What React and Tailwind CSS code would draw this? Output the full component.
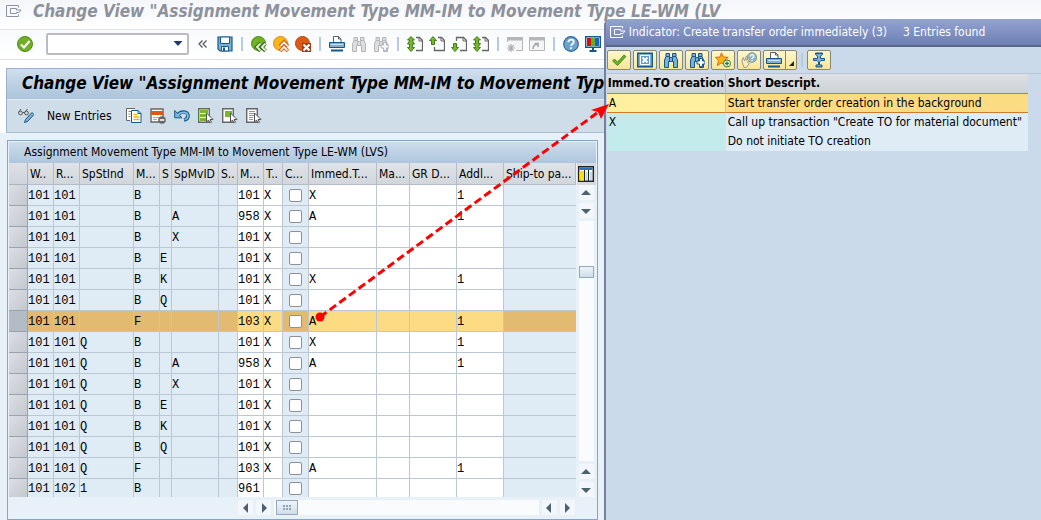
import React from "react";

// tone: "key" is a display-only column, "edit" an input column
const COLUMNS = [
    { head: "W..", width: "w-[26px]", tone: "key" },
    { head: "R...", width: "w-[26px]", tone: "key" },
    { head: "SpStInd", width: "w-[54px]", tone: "key" },
    { head: "M...", width: "w-[26px]", tone: "key" },
    { head: "S", width: "w-[12px]", tone: "key" },
    { head: "SpMvID", width: "w-[47px]", tone: "key" },
    { head: "S..", width: "w-[19px]", tone: "key" },
    { head: "M...", width: "w-[26px]", tone: "edit" },
    { head: "T..", width: "w-[19px]", tone: "edit" },
    { head: "C...", width: "w-[26px]", tone: "check" },
    { head: "Immed.T...", width: "w-[68px]", tone: "edit" },
    { head: "Ma...", width: "w-[33px]", tone: "edit" },
    { head: "GR D...", width: "w-[47px]", tone: "edit" },
    { head: "Addl...", width: "w-[47px]", tone: "edit" },
    { head: "Ship-to pa...", width: "", tone: "key" },
];

const ROWS = [
    ["101", "101", "", "B", "", "", "", "101", "X", "", "X", "", "", "1", ""],
    ["101", "101", "", "B", "", "A", "", "958", "X", "", "A", "", "", "1", ""],
    ["101", "101", "", "B", "", "X", "", "101", "X", "", "", "", "", "", ""],
    ["101", "101", "", "B", "E", "", "", "101", "X", "", "", "", "", "", ""],
    ["101", "101", "", "B", "K", "", "", "101", "X", "", "X", "", "", "1", ""],
    ["101", "101", "", "B", "Q", "", "", "101", "X", "", "", "", "", "", ""],
    ["101", "101", "", "F", "", "", "", "103", "X", "", "A", "", "", "1", ""],
    ["101", "101", "Q", "B", "", "", "", "101", "X", "", "X", "", "", "1", ""],
    ["101", "101", "Q", "B", "", "A", "", "958", "X", "", "A", "", "", "1", ""],
    ["101", "101", "Q", "B", "", "X", "", "101", "X", "", "", "", "", "", ""],
    ["101", "101", "Q", "B", "E", "", "", "101", "X", "", "", "", "", "", ""],
    ["101", "101", "Q", "B", "K", "", "", "101", "X", "", "", "", "", "", ""],
    ["101", "101", "Q", "B", "Q", "", "", "101", "X", "", "", "", "", "", ""],
    ["101", "101", "Q", "F", "", "", "", "103", "X", "", "A", "", "", "1", ""],
    ["101", "102", "1", "B", "", "", "", "961", "", "", "", "", "", "", ""],
];

const SELECTED = 6;

const Svg = ({ children }) => (
    <svg viewBox="0 0 16 16" className="size-4 shrink-0" fill="none" aria-hidden="true">{children}</svg>
);

const WindowIcon = ({ color }) => (
    <svg viewBox="0 0 16 14" className="w-4 h-[14px] shrink-0" fill="none" stroke={color} aria-hidden="true">
        <path d="M12.5 3.5V1.5H.5v11h12v-2" />
        <path d="M4.5 4.5h6V6H15l-2 2.5h-2.5v1h-6z" />
    </svg>
);

const OkIcon = () => (
    <Svg>
        <circle cx="8" cy="8" r="7.5" fill="#6fb122" stroke="#4d8a1c" />
        <path d="M4 8.5l3 3L12.500 5" stroke="#fff" strokeWidth="2.2" />
    </Svg>
);

const SaveIcon = () => (
    <Svg>
        <path d="M1 1h14v14H3l-2-2z" fill="#7fb0d3" stroke="#15598c" strokeWidth="1.2" />
        <path d="M3.500 1h9v6.500h-9z" fill="#fff" stroke="#15598c" />
        <path d="M4.500 10.500h7V15h-7z" fill="#fff" stroke="#15598c" />
        <path d="M6 11.500h2V15H6z" fill="#15598c" />
    </Svg>
);

const BackIcon = () => (
    <Svg>
        <circle cx="7.500" cy="7.500" r="7" fill="#6fb122" stroke="#4d8a1c" />
        <path d="M9.500 7l-4 4 4 4M14.500 7l-4 4 4 4" stroke="#3d7a14" strokeWidth="3.6" />
        <path d="M9.500 7.500L6 11l3.500 3.500M14.500 7.500L11 11l3.500 3.500" stroke="#fff" strokeWidth="1.7" />
    </Svg>
);

const ExitIcon = () => (
    <Svg>
        <circle cx="7.500" cy="7.500" r="7" fill="#f9b516" stroke="#e08a1a" />
        <path d="M7 10l4-4 4 4M7 15l4-4 4 4" stroke="#d9641a" strokeWidth="3.6" />
        <path d="M7.500 10L11 6.500l3.500 3.500M7.500 14.500L11 11l3.500 3.500" stroke="#fff" strokeWidth="1.7" />
    </Svg>
);

const CancelIcon = () => (
    <Svg>
        <circle cx="7.500" cy="7.500" r="7" fill="#dc5a14" stroke="#b8450e" />
        <path d="M7 7h9v9H7z" fill="#a83a12" />
        <path d="M8.500 8.500l6 6M14.500 8.500l-6 6" stroke="#fff" strokeWidth="2.2" />
    </Svg>
);

const PrintIcon = () => (
    <Svg>
        <path d="M4.500 7V.5h5L12 3v4" fill="#fff" stroke="#55606a" />
        <path d="M9.500 .5V3H12" stroke="#55606a" />
        <path d="M.5 6.500h15v5H.5z" fill="#7fb0d3" stroke="#15598c" />
        <path d="M2 8.500h12" stroke="#c8e0f0" />
        <path d="M2 14.500h12" stroke="#15598c" strokeWidth="2" />
    </Svg>
);

const Binoculars = ({ fill, stroke, more, moreFill }) => (
    <Svg>
        <path d="M1.500 15.500V8L3 4.500v-3h3.500v4h3v-4H13v3L14.500 8v7.500h-4V9.500h-5v6z" fill={fill} stroke={stroke} />
        <path d="M3 4.500h3.500M9.500 4.500H13M6.500 5.500v4M9.500 5.500v4" stroke={stroke} />
        {more && <path d="M10.500 6.500h3v2.500H16v3h-2.500v2.500h-3V12H8V9h2.500z" fill={moreFill} stroke={stroke} />}
    </Svg>
);

// arrows: "first" | "prev" | "next" | "last"
const PageIcon = ({ arrows }) => (
    <Svg>
        {arrows === "prev" && <path d="M5.500 11v3.500h10V4.500l-3-3H9" stroke="#666" strokeWidth="1.3" />}
        {arrows === "next" && <path d="M5.500 5V1.500h7l3 3v10H9" stroke="#666" strokeWidth="1.3" />}
        {(arrows === "first" || arrows === "last") && <path d="M9 1.500h3.500l3 3v10H9" stroke="#666" strokeWidth="1.3" />}
        <path d="M12 1.500V5h3.500" stroke="#666" />
        {arrows === "prev" && <path d="M4 .5l3.500 4h-2v4h-3v-4h-2z" fill="#76b82a" stroke="#3f7d1c" />}
        {arrows === "next" && <path d="M4 15.500l3.500-4h-2v-4h-3v4h-2z" fill="#76b82a" stroke="#3f7d1c" />}
        {arrows === "first" && (
            <path d="M4 .5L7.500 4h-2v1L7.500 8h-2v3.500h2L4 15.500l-3.500-4h2V8h-2l2-3V4h-2z" fill="#76b82a" stroke="#3f7d1c" />
        )}
        {arrows === "last" && (
            <path d="M4 .5L7.500 4h-2v3.500h2l-2 3v1h2L4 15.500l-3.500-4h2v-1l-2-3h2V4h-2z" fill="#76b82a" stroke="#3f7d1c" />
        )}
    </Svg>
);

const SessionIcon = ({ shortcut }) => (
    <Svg>
        <path d={shortcut ? "M.5 1.500h15v13H.5z" : "M.5 6V1.500h15v13H9"} fill="#f4f5f6" stroke="#b4b7ba" />
        <path d="M.5 1h15v3.500H.5z" fill="#b4b7ba" />
        {shortcut
            ? <path d="M4 13c0-3 1-4.500 4.500-5M5.500 7.500H9V11" stroke="#a5a8ab" strokeWidth="1.6" />
            : <path d="M4 8v8M0 12h8M1.200 9.200l5.600 5.600M6.800 9.200l-5.600 5.600" stroke="#aaadb0" strokeWidth="1.2" />}
    </Svg>
);

const HelpIcon = () => (
    <Svg>
        <circle cx="8" cy="8" r="7.3" fill="#6ba3cc" stroke="#2a6796" strokeWidth="1.2" />
        <path d="M5.300 6.200C5.300 2.800 10.800 3 10.800 6c0 2-2.700 2-2.700 4" stroke="#fff" strokeWidth="1.7" />
        <path d="M7.200 11.200H9V13H7.200z" fill="#fff" />
    </Svg>
);

const MonitorIcon = () => (
    <Svg>
        <path d="M.7 .7h14.600v10.600H.7z" fill="#fff" stroke="#15598c" strokeWidth="1.4" />
        <path d="M2 2h4v8H2z" fill="#d40f0f" />
        <path d="M6 2h4v8H6z" fill="#5cb31f" />
        <path d="M10 2h4v8h-4z" fill="#1f5fc4" />
        <path d="M8 12v3M4.500 15h7" stroke="#15598c" strokeWidth="2" />
    </Svg>
);

const GlassesPencilIcon = () => (
    <Svg>
        <circle cx="2.500" cy="5" r="1.9" stroke="#555" />
        <circle cx="8.500" cy="5" r="1.9" stroke="#555" />
        <path d="M.6 4.500L3 1M6.600 4.500L9.500 1M4.400 4.500h2.200" stroke="#555" />
        <path d="M6.500 14.500l1-3L14 4.500l2 2-6.500 7z" fill="#7fb0d3" stroke="#15598c" />
    </Svg>
);

const CopyIcon = () => (
    <Svg>
        <path d="M9 .5H.5v12H4" fill="#fff" stroke="#666" />
        <path d="M2.500 3.500H5M2.500 6h2M2.500 8.500h2" stroke="#888" />
        <path d="M5.500 2.500h6.500l3 3v9H5.500z" fill="#fff" stroke="#15598c" />
        <path d="M12 2.500v3h3" stroke="#15598c" />
        <path d="M7.500 6.500h4M7.500 9h6M7.500 11.500h6" stroke="#f2b21c" strokeWidth="1.4" />
    </Svg>
);

const DeleteIcon = () => (
    <Svg>
        <path d="M1 1h12v13H1z" fill="#fff" stroke="#666" strokeWidth="1.4" />
        <path d="M1 3h12v4H1z" fill="#dc5a14" />
        <path d="M3 9.500h8M3 11.500h4" stroke="#aaa" />
        <circle cx="12" cy="12" r="3.8" fill="#666" />
        <path d="M9.800 12h4.400" stroke="#fff" strokeWidth="1.6" />
    </Svg>
);

const UndoIcon = () => (
    <Svg>
        <path d="M4 6.500C7 3 13.500 3 14 7.500c.2 2.500-1.500 4-4 4.500" stroke="#15598c" strokeWidth="3.6" />
        <path d="M.7 2.500v7.300H8z" fill="#7fb0d3" stroke="#15598c" />
        <path d="M3.500 7.200C7 3.500 13.200 3.500 13.900 7.500c.3 2-1.400 3.600-3.400 4.100" stroke="#8fbedd" strokeWidth="1.7" />
    </Svg>
);

// filled: "all" | "block", or nothing for a plain list
const ListCursorIcon = ({ filled }) => (
    <Svg>
        <path d="M.7 .7h10.600v13.600H.7z" fill="#fff" stroke="#666" strokeWidth="1.4" />
        {filled === "all" && <path d="M2 2h8v3H2zM2 6h8v3H2zM2 10h6v3H2z" fill="#76b82a" />}
        {filled === "block" && <path d="M3 3h7v6H3z" fill="#76b82a" />}
        {!filled && <path d="M3 3.500h6M3 5.500h6M3 7.500h5M3 9.500h4M3 11.500h4" stroke="#999" />}
        <path d="M8.500 5v9l2-2 1.500 3 1.500-.8L12 11.500h3z" fill="#fff" stroke="#555" />
    </Svg>
);

const CheckIcon = () => (
    <Svg>
        <path d="M1.500 9l2-2 3 3L13 3l2 1.500-8.500 9z" fill="#6fb122" stroke="#3f7d1c" strokeWidth=".8" />
    </Svg>
);

const CloseBoxIcon = () => (
    <Svg>
        <path d="M.7 1.200h14.600v13.600H.7z" fill="#7fb0d3" stroke="#15598c" strokeWidth="1.4" />
        <path d="M3.500 3.500h9v9h-9z" fill="#5f9cc8" stroke="#fff" />
        <path d="M5.500 5.500l5 5M10.500 5.500l-5 5" stroke="#fff" strokeWidth="2" />
    </Svg>
);

const StarIcon = () => (
    <Svg>
        <path d="M6.500 .8L8.200 5l5 .3-3.800 3.200 1.200 5-4.100-2.700-4.200 2.700 1.200-5L.5 5.300 5 5z" fill="#f9b516" stroke="#dc6a14" />
        <circle cx="12" cy="11.500" r="3.500" fill="#fff" stroke="#2f7d1c" />
        <path d="M12 9.500v4M10 11.500h4" stroke="#2f7d1c" strokeWidth="1.4" />
    </Svg>
);

const HandHelpIcon = () => (
    <Svg>
        <circle cx="11" cy="5.500" r="4.800" fill="#8fb6c4" stroke="#7c9aa4" />
        <path d="M9.300 4.500c0-2.400 3.400-2.300 3.400-.2 0 1.400-1.700 1.400-1.700 2.700M11 8v1.300" stroke="#fff" strokeWidth="1.3" />
        <path d="M3 15.500L.8 9l1.500-3.500L3.500 9l2-5 1 .5-1 4L8 5.500l1 .8-2.500 4 2 1-3 4z" fill="#f7eebb" stroke="#9a9a88" />
    </Svg>
);

const HoldIcon = () => (
    <Svg>
        <path d="M4.500 1v1.500L6.500 4v2.500h-4v2h3.500L7.500 10v3H5v2h6v-2H8.500v-3L10 8.500h3.500v-2h-4V4l2-1.500V1z" fill="#7fb0d3" stroke="#15598c" />
        <path d="M4 1.500h8" stroke="#15598c" />
    </Svg>
);

const ConfigIcon = () => (
    <Svg>
        <path d="M.7 .7h14.600v14.600H.7z" fill="#fff" stroke="#222" strokeWidth="1.4" />
        <path d="M1.500 1.500h13V4h-13z" fill="#2f6fb5" />
        <path d="M1.500 5H6v9.500H1.500z" fill="#ffe500" />
        <path d="M6.500 4v11M10.500 4v11" stroke="#222" />
        <path d="M8.500 6v8M12.800 6v8" stroke="#bcd6ea" strokeWidth="2" />
    </Svg>
);

const UP = "M8 5l5 5H3z";
const DOWN = "M8 11l5-5H3z";
const LEFT = "M5 8l5-5v10z";
const RIGHT = "M11 8L6 3v10z";

const ScrollButton = ({ label, d }) => (
    <button type="button" aria-label={label} className="size-[15px] shrink-0 flex items-center justify-center bg-[#f3f7fb]">
        <svg viewBox="0 0 16 16" className="size-4 shrink-0" fill="#4c6272" aria-hidden="true"><path d={d} /></svg>
    </button>
);

const IconButton = ({ label, children }) => (
    <button type="button" aria-label={label} className="size-4 shrink-0">{children}</button>
);

const Separator = () => (
    <span className="w-1.5 shrink-0 flex justify-center"><span className="w-0.5 h-3.5 bg-[#b5cce0]" /></span>
);

const SystemToolbar = () => (
    <div className="flex items-center gap-1.5 h-[31px] pl-[17px] pb-px border-y border-[#dfe2e6] bg-gradient-to-b from-[#f8fafc] to-white">
        <IconButton label="Enter"><OkIcon /></IconButton>
        <div className="ml-[7px] w-[143px] h-[22px] shrink-0 flex items-center border-2 border-[#b9bcc0] rounded-xs bg-white">
            <input aria-label="Command" className="flex-1 min-w-0 h-full px-1 text-xs outline-none" />
            <button type="button" aria-label="Command history" className="px-1">
                <svg viewBox="0 0 10 6" className="w-2.5 h-1.5" fill="#1f3a6e" aria-hidden="true"><path d="M.5 0h9L5 5z" /></svg>
            </button>
        </div>
        <IconButton label="Collapse">
            <Svg><path d="M7.500 4.500L4 8l3.500 3.500M11.500 4.500L8 8l3.500 3.500" stroke="#555" strokeWidth="1.2" /></Svg>
        </IconButton>
        <IconButton label="Save"><SaveIcon /></IconButton>
        <Separator />
        <IconButton label="Back"><BackIcon /></IconButton>
        <IconButton label="Exit"><ExitIcon /></IconButton>
        <IconButton label="Cancel"><CancelIcon /></IconButton>
        <Separator />
        <IconButton label="Print"><PrintIcon /></IconButton>
        <IconButton label="Find"><Binoculars fill="#dcdee0" stroke="#b4b7ba" /></IconButton>
        <IconButton label="Find next"><Binoculars fill="#dcdee0" stroke="#b4b7ba" more moreFill="#f4f5f6" /></IconButton>
        <Separator />
        <IconButton label="First page"><PageIcon arrows="first" /></IconButton>
        <IconButton label="Previous page"><PageIcon arrows="prev" /></IconButton>
        <IconButton label="Next page"><PageIcon arrows="next" /></IconButton>
        <IconButton label="Last page"><PageIcon arrows="last" /></IconButton>
        <Separator />
        <IconButton label="Create session"><SessionIcon /></IconButton>
        <IconButton label="Create shortcut"><SessionIcon shortcut /></IconButton>
        <Separator />
        <IconButton label="Help"><HelpIcon /></IconButton>
        <IconButton label="Customize layout"><MonitorIcon /></IconButton>
    </div>
);

const cellColor = (tone, selected) => {
    if (selected) return tone === "edit" ? "bg-[#fcdc82]" : "bg-[#e2bb70]";
    return tone === "edit" ? "bg-white" : "bg-[#dfebf5]";
};

const MovementTable = () => (
    <table className="flex-1 min-w-0 table-fixed border-separate border-spacing-0">
        <thead>
            <tr className="h-[22px] text-xs text-black">
                <th aria-label="Select" className="w-[19px] p-0 border-r border-b border-[#a9b4c0] bg-gradient-to-b from-[#dde1e6] to-[#cfd4da]" />
                {COLUMNS.map((col, i) => (
                    <th key={i} className={`${col.width} p-0 pl-0.5 pt-0.5 text-left font-normal leading-[19px] whitespace-nowrap border-r border-b border-[#b3bcc8] bg-gradient-to-b from-[#dfe3e7] to-[#d2d7dc]`}>
                        {col.head}
                    </th>
                ))}
            </tr>
        </thead>
        <tbody className="font-['Liberation_Mono',monospace] text-xs text-black">
            {ROWS.map((row, r) => {
                const last = r === ROWS.length - 1;
                const selected = r === SELECTED;
                const height = last ? "h-[18px] leading-4" : "h-[21px] leading-[18px] border-b";
                return (
                    <tr key={r}>
                        <td className={`${height} p-0 border-r border-[#9aa3ad] ${selected ? "bg-[#b3bcc6]" : "bg-gradient-to-br from-[#dcdfe4] to-[#c3c8cf]"}`}>
                            <button type="button" aria-label={`Select row ${r + 1}`} className="block w-full h-4" />
                        </td>
                        {row.map((value, c) => {
                            const col = COLUMNS[c];
                            const edge = c === COLUMNS.length - 1 ? "" : "border-r";
                            const pad = col.tone === "check" ? "p-0" : "p-0 pt-0.5";
                            return (
                                <td key={c} className={`${height} ${edge} ${pad} ${cellColor(col.tone, selected)} whitespace-nowrap border-[#bcc7d4]`}>
                                    {col.tone === "check" && (
                                        <input type="checkbox" aria-label={`Row ${r + 1} indicator`} className="block mx-auto appearance-none size-[13px] border border-[#8e9298] rounded-xs bg-white" />
                                    )}
                                    {col.tone === "edit" && (
                                        <input aria-label={`Row ${r + 1} ${col.head}`} defaultValue={value} className="block w-full p-0 bg-transparent outline-none" />
                                    )}
                                    {col.tone === "key" && value}
                                </td>
                            );
                        })}
                    </tr>
                );
            })}
        </tbody>
    </table>
);

const TablePanel = () => (
    <section className="ml-[7px] mr-1.5 mt-1.5 p-px border border-[#86a5c4] bg-[#e8f0f8]">
        <h2 className="h-[21px] pl-[15px] text-xs leading-[21px] text-black bg-gradient-to-b from-[#cddded] to-[#aec6dc]">
            Assignment Movement Type MM-IM to Movement Type LE-WM (LVS)
        </h2>
        <div className="flex">
            <MovementTable />
            <div className="w-5 pl-px shrink-0 flex flex-col items-center">
                <button type="button" aria-label="Configuration" className="w-full h-[22px] shrink-0 flex items-center justify-center bg-[#d6dade]"><ConfigIcon /></button>
                <div className="flex-1 flex flex-col gap-[3px] w-[15px]">
                    <ScrollButton label="Scroll up" d={UP} />
                    <ScrollButton label="Page up" d={DOWN} />
                    <div className="flex-1 pt-[45px] bg-[#fafbfc]">
                        <div className="h-3 border border-[#93a9bc] bg-gradient-to-b from-[#eef4f9] to-[#cfdeea]" />
                    </div>
                    <ScrollButton label="Page down" d={UP} />
                    <ScrollButton label="Scroll down" d={DOWN} />
                </div>
            </div>
        </div>
        <div className="flex items-center gap-[3px] h-[21px] pl-[229px] pr-[21px]">
            <ScrollButton label="Scroll left" d={LEFT} />
            <ScrollButton label="Step right" d={RIGHT} />
            <div className="flex-1 flex h-[15px] bg-[#fafbfc]">
                <div className="w-[22px] ml-0.5 border border-[#93a9bc] bg-gradient-to-b from-[#eef4f9] to-[#cfdeea] flex items-center justify-center">
                    <svg viewBox="0 0 8 5" className="w-2 h-[5px]" fill="#8fa5b8" aria-hidden="true"><path d="M0 0h2v2H0zM3 0h2v2H3zM6 0h2v2H6zM0 3h2v2H0zM3 3h2v2H3zM6 3h2v2H6z" /></svg>
                </div>
            </div>
            <ScrollButton label="Step left" d={LEFT} />
            <ScrollButton label="Scroll right" d={RIGHT} />
        </div>
    </section>
);

const PopupButton = ({ label, children }) => (
    <button type="button" aria-label={label} className="w-6 h-5 flex items-center justify-center border border-[#8a8670] rounded-xs bg-gradient-to-b from-[#fdf7cf] to-[#f8e695]">
        {children}
    </button>
);

const HitListPopup = () => (
    <aside className="absolute top-[19px] bottom-0 right-0 w-[42%] flex flex-col border-l-2 border-[#75809c] rounded-tl-md bg-[#cbdaea] overflow-hidden">
        <header className="flex items-center h-7 shrink-0 pl-1 border-b-2 border-[#5c6684] bg-gradient-to-b from-[#93a3d3] to-[#6d7fb2] text-xs text-white whitespace-nowrap">
            <WindowIcon color="#fff" />
            <h2 className="ml-[3px]">Indicator: Create transfer order immediately (3)</h2>
            <span className="ml-4">3 Entries found</span>
        </header>
        <div className="flex items-center gap-0.5 h-[27px] shrink-0 pl-px border-b border-[#b6c6d8]">
            <PopupButton label="Copy"><CheckIcon /></PopupButton>
            <PopupButton label="Close"><CloseBoxIcon /></PopupButton>
            <PopupButton label="Find"><Binoculars fill="#7fb0d3" stroke="#15598c" /></PopupButton>
            <PopupButton label="Find next"><Binoculars fill="#7fb0d3" stroke="#15598c" more moreFill="#fff" /></PopupButton>
            <PopupButton label="Insert in personal list"><StarIcon /></PopupButton>
            <PopupButton label="Help"><HandHelpIcon /></PopupButton>
            <button type="button" aria-label="Print" className="w-[34px] h-5 flex items-center pl-0.5 gap-[3px] border border-[#8a8670] rounded-xs bg-gradient-to-b from-[#fdf7cf] to-[#f8e695]">
                <PrintIcon />
                <span className="self-stretch w-px bg-[#8a8670]" />
                <svg viewBox="0 0 5 5" className="size-[5px] self-end mb-[3px]" fill="#222" aria-hidden="true"><path d="M5 0v5H0z" /></svg>
            </button>
            <Separator />
            <PopupButton label="Hold"><HoldIcon /></PopupButton>
        </div>
        <table className="ml-px mr-[13px] table-fixed border-separate border-spacing-0 text-xs text-black">
            <thead>
                <tr className="text-left leading-[19px] bg-gradient-to-b from-[#dde1e5] to-[#cdd2d7]">
                    <th className="w-[119px] p-0 pl-px whitespace-nowrap border-r border-[#b3bcc8]">Immed.TO creation</th>
                    <th className="p-0 pl-0.5">Short Descript.</th>
                </tr>
            </thead>
            <tbody className="leading-[19px]">
                <tr>
                    <td className="h-5 p-0 pl-0.5 leading-[18px] bg-[#fff09f] border-y border-y-[#cf7a2c] border-r border-r-[#c4c4b4]">A</td>
                    <td className="p-0 pl-0.5 leading-[18px] bg-[#fcdc82] border-y border-[#cf7a2c]">Start transfer order creation in the background</td>
                </tr>
                <tr>
                    <td className="p-0 pl-0.5 bg-[#c4ebec]">X</td>
                    <td className="p-0 pl-0.5 whitespace-nowrap bg-[#dfebf5]">Call up transaction "Create TO for material document"</td>
                </tr>
                <tr>
                    <td className="p-0 bg-[#c4ebec]" />
                    <td className="p-0 pl-0.5 bg-[#dfebf5]">Do not initiate TO creation</td>
                </tr>
            </tbody>
        </table>
    </aside>
);

// Dashed pointer from the selected field to its entry in the hit list
const Pointer = () => (
    <svg viewBox="0 0 300 220" className="absolute left-[310px] top-[103px] w-[300px] h-[220px] pointer-events-none" fill="none" aria-hidden="true">
        <circle cx="10" cy="214" r="4.5" fill="#f00" />
        <path d="M10 214L287 10" stroke="#f00" strokeWidth="3" strokeDasharray="8 4" />
        <path d="M299 1l-8 15-3-7-7-2z" fill="#f00" />
    </svg>
);

const App = () => {
    return (
        <div className="relative min-h-screen overflow-hidden bg-white font-['DejaVu_Sans_Condensed','DejaVu_Sans',sans-serif]">
            <header className="flex items-center h-[29px] pl-1.5 pb-2 bg-gradient-to-b from-[#f4f6fa] to-white">
                <WindowIcon color="#8d93a3" />
                <div className="ml-[11px] text-[17px] leading-5 font-bold italic text-[#8c919c] whitespace-nowrap">
                    Change View "Assignment Movement Type MM-IM to Movement Type LE-WM (LV
                </div>
            </header>
            <SystemToolbar />
            <main className="w-[58%] pl-1.5 pt-2 bg-white">
                <div className="border-t border-l border-[#9db2c8] bg-[#cfdde8]">
                    <h1 className="h-[30px] pl-[15px] text-[17px] leading-7 font-bold italic text-black whitespace-nowrap bg-gradient-to-b from-[#d0dfec] to-[#abc3da]">
                        Change View "Assignment Movement Type MM-IM to Movement Typ
                    </h1>
                    <div className="flex items-center h-[34px] pl-[11px] gap-2 border-t border-b border-t-[#e4edf4] border-b-[#aebfd0]">
                        <IconButton label="Display/Change"><GlassesPencilIcon /></IconButton>
                        <button type="button" className="ml-[5px] mr-1.5 text-xs text-black whitespace-nowrap">New Entries</button>
                        <IconButton label="Copy as"><CopyIcon /></IconButton>
                        <IconButton label="Delete"><DeleteIcon /></IconButton>
                        <IconButton label="Undo change"><UndoIcon /></IconButton>
                        <IconButton label="Select all"><ListCursorIcon filled="all" /></IconButton>
                        <IconButton label="Select block"><ListCursorIcon filled="block" /></IconButton>
                        <IconButton label="Deselect all"><ListCursorIcon /></IconButton>
                    </div>
                </div>
                <div className="-ml-1.5 pt-px pb-0.5 bg-[#e8f0f8]">
                    <TablePanel />
                </div>
            </main>
            <HitListPopup />
            <Pointer />
        </div>
    );
};

export default App;
